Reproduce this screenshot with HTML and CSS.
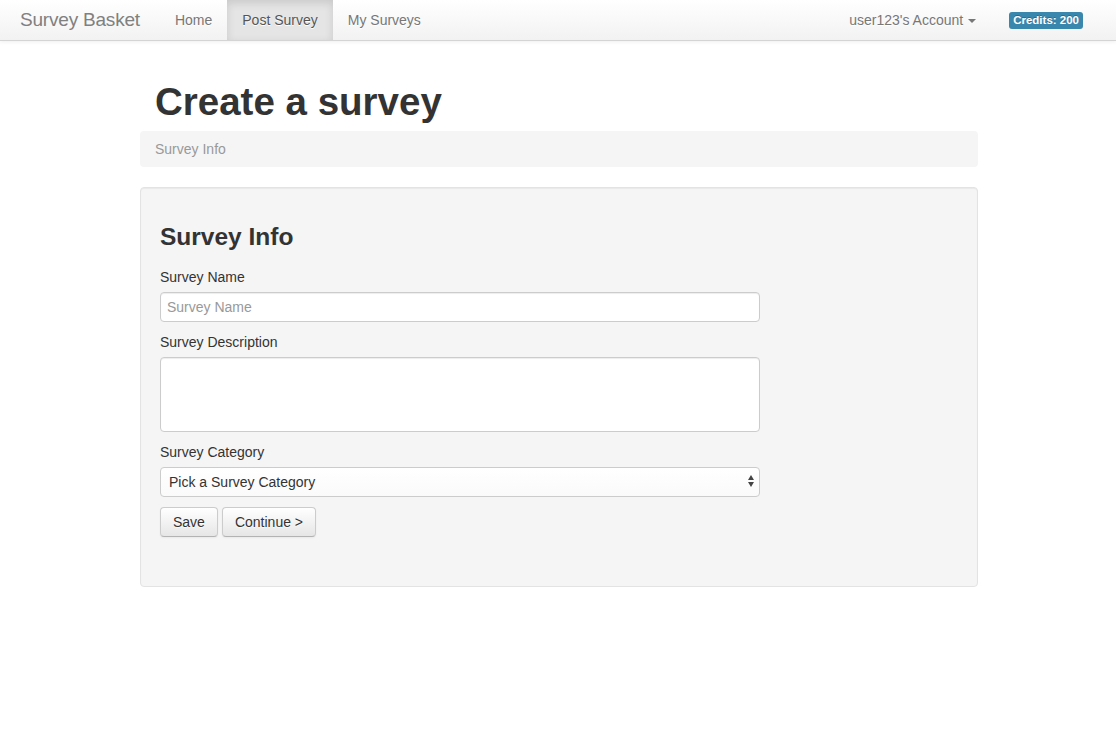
FILE: index.html
```html
<!DOCTYPE html>
<html>
<head>
<meta charset="utf-8">
<title>Survey Basket</title>
<link rel="stylesheet" href="styles.css">
</head>
<body>
<header class="navbar">
  <a class="brand" href="#">Survey Basket</a>
  <ul class="nav">
    <li><a href="#">Home</a></li>
    <li class="active"><a href="#">Post Survey</a></li>
    <li><a href="#">My Surveys</a></li>
  </ul>
  <div class="nav-right">
    <a class="account" href="#">user123's Account <span class="caret"></span></a>
    <span class="label-info">Credits: 200</span>
  </div>
</header>
<main class="container">
  <h1 class="title">Create a survey</h1>
  <div class="breadcrumb">Survey Info</div>
  <section class="well">
    <h3 class="section-title">Survey Info</h3>
    <form class="form">
      <label class="label">Survey Name</label>
      <input class="field" type="text" placeholder="Survey Name">
      <label class="label">Survey Description</label>
      <textarea class="field textarea"></textarea>
      <label class="label">Survey Category</label>
      <div class="select-wrap">
        <select class="field select">
          <option>Pick a Survey Category</option>
        </select>
        <span class="select-arrows"><span class="up"></span><span class="down"></span></span>
      </div>
      <div class="actions">
        <button type="button" class="btn">Save</button>
        <button type="button" class="btn">Continue &gt;</button>
      </div>
    </form>
  </section>
</main>
</body>
</html>
```

FILE: styles.css
```css
* { box-sizing: border-box; }
html, body { margin: 0; padding: 0; }
body {
  font-family: "Liberation Sans", Arial, Helvetica, sans-serif;
  font-size: 14px;
  line-height: 20px;
  color: #333;
  background: #fff;
}
a { text-decoration: none; }

.navbar {
  height: 41px;
  display: flex;
  align-items: stretch;
  background: linear-gradient(to bottom, #ffffff, #f2f2f2);
  border-bottom: 1px solid #d4d4d4;
  box-shadow: 0 1px 4px rgba(0,0,0,0.065);
}
.brand {
  padding: 10px 20px 10px 20px;
  font-size: 19px;
  line-height: 20px;
  color: #808080;
  letter-spacing: -0.2px;
}
.nav {
  list-style: none;
  margin: 0;
  padding: 0;
  display: flex;
}
.nav li a {
  display: block;
  height: 40px;
  padding: 10px 15px;
  color: #777;
  text-shadow: 0 1px 0 #fff;
}
.nav li.active a {
  background: #e5e5e5;
  color: #555;
  box-shadow: inset 0 3px 8px rgba(0,0,0,0.125);
}
.nav-right {
  margin-left: auto;
  display: flex;
  align-items: center;
  padding-right: 33px;
}
.account {
  color: #777;
  padding: 10px 0;
  margin-right: 33px;
  display: flex;
  align-items: center;
  text-shadow: 0 1px 0 #fff;
}
.caret {
  display: inline-block;
  width: 0; height: 0;
  margin-left: 5px;
  margin-top: 1px;
  border-top: 4px solid #777;
  border-left: 4px solid transparent;
  border-right: 4px solid transparent;
}
.label-info {
  background: #3a87ad;
  color: #fff;
  font-weight: bold;
  font-size: 11.5px;
  line-height: 13px;
  padding: 2px 4px;
  border-radius: 3px;
  text-shadow: 0 -1px 0 rgba(0,0,0,0.25);
  margin-top: 1px;
}

.container {
  width: 838px;
  margin: 0 138px 0 140px;
  padding-top: 41px;
}
.title {
  margin: 0 0 9px;
  padding-left: 15px;
  font-size: 38.5px;
  line-height: 40px;
  font-weight: bold;
  color: #333;
}
.breadcrumb {
  background: #f5f5f5;
  border-radius: 4px;
  padding: 8px 15px;
  color: #999;
  margin-bottom: 20px;
}
.well {
  background: #f5f5f5;
  border: 1px solid #e3e3e3;
  border-radius: 4px;
  box-shadow: inset 0 1px 1px rgba(0,0,0,0.05);
  padding: 19px 19px 19px;
}
.section-title {
  margin: 10px 0;
  font-size: 24.5px;
  line-height: 40px;
  font-weight: bold;
  color: #333;
}
.form { display: flex; flex-direction: column; align-items: flex-start; }
.label {
  display: block;
  margin-bottom: 5px;
  color: #333;
}
.field {
  display: block;
  width: 600px;
  height: 30px;
  margin: 0 0 10px;
  padding: 4px 6px;
  font-family: inherit;
  font-size: 14px;
  line-height: 20px;
  color: #555;
  background: #fff;
  border: 1px solid #ccc;
  border-radius: 4px;
  box-shadow: inset 0 1px 1px rgba(0,0,0,0.075);
  outline: none;
}
.field::placeholder { color: #999; }
.textarea { height: 75px; resize: none; }
.select-wrap { position: relative; width: 600px; }
.select {
  -webkit-appearance: none;
  appearance: none;
  padding-left: 8px;
  color: #333;
  background: linear-gradient(to bottom, #ffffff, #fafafa);
  box-shadow: none;
}
.select-arrows {
  position: absolute;
  right: 5px;
  top: 8px;
  width: 8px;
  height: 14px;
  display: flex;
  flex-direction: column;
  align-items: center;
  gap: 2px;
  pointer-events: none;
}
.select-arrows .up {
  width: 0; height: 0;
  border-bottom: 5px solid #444;
  border-left: 3px solid transparent;
  border-right: 3px solid transparent;
}
.select-arrows .down {
  width: 0; height: 0;
  border-top: 5px solid #444;
  border-left: 3px solid transparent;
  border-right: 3px solid transparent;
}
.actions {
  display: flex;
  gap: 4px;
  margin-bottom: 30px;
}
.btn {
  font-family: inherit;
  font-size: 14px;
  line-height: 20px;
  height: 30px;
  padding: 4px 12px;
  color: #333;
  text-shadow: 0 1px 1px rgba(255,255,255,0.75);
  background: linear-gradient(to bottom, #ffffff, #e6e6e6);
  border: 1px solid #cccccc;
  border-bottom-color: #b3b3b3;
  border-radius: 4px;
  box-shadow: inset 0 1px 0 rgba(255,255,255,0.2), 0 1px 2px rgba(0,0,0,0.05);
  cursor: pointer;
}
```
